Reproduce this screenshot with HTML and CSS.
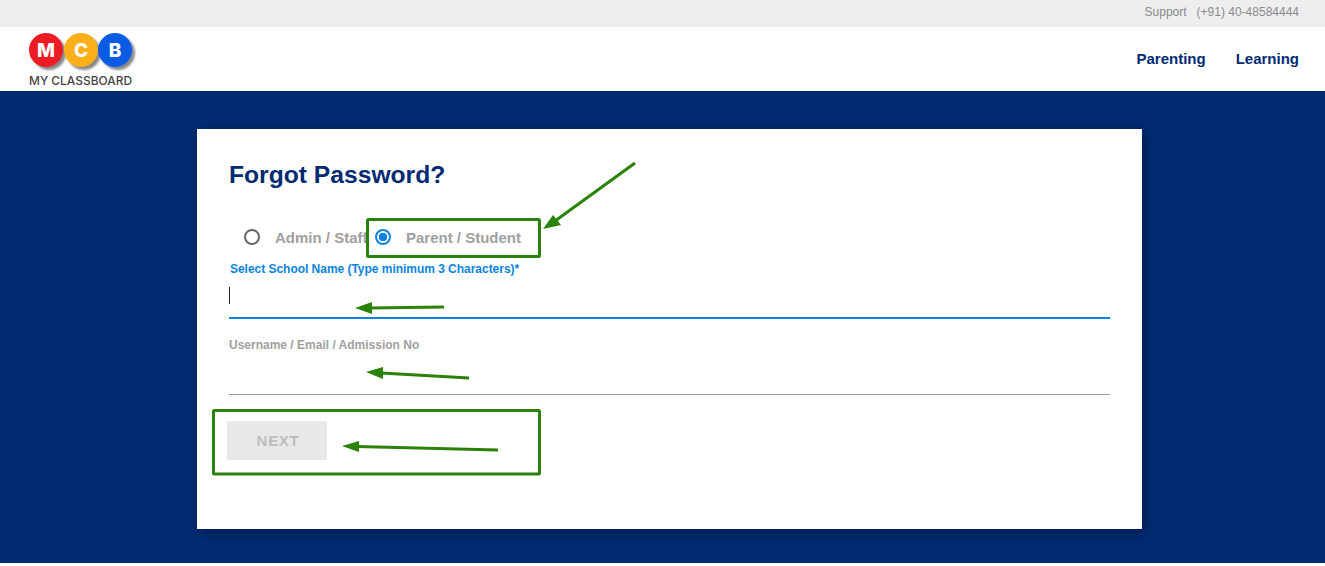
FILE: index.html
```html
<!DOCTYPE html>
<html lang="en">
<head>
    <meta charset="UTF-8">
    <meta name="viewport" content="width=device-width, initial-scale=1.0">
    <title>Forgot Password - My Classboard</title>
    <link rel="stylesheet" href="styles.css">
</head>
<body>
    <div class="topbar">
        <span>Support</span>
        <span>(+91) 40-48584444</span>
    </div>

    <header class="header">
        <svg class="logo" width="110" height="60" viewBox="0 0 110 60">
            <defs>
                <filter id="soft" x="-20%" y="-20%" width="150%" height="150%">
                    <feGaussianBlur stdDeviation="1"/>
                </filter>
            </defs>
            <circle cx="21" cy="21" r="17" fill="#888" filter="url(#soft)"/>
            <circle cx="56" cy="21" r="17" fill="#888" filter="url(#soft)"/>
            <circle cx="90" cy="21" r="17" fill="#888" filter="url(#soft)"/>
            <circle cx="18" cy="18" r="17" fill="#ed1c24"/>
            <circle cx="53" cy="18" r="17" fill="#fdb01a"/>
            <circle cx="87" cy="18" r="17" fill="#0b5ce5"/>
            <text class="logo-letter" x="18" y="25">M</text>
            <text class="logo-letter" x="53" y="25">C</text>
            <text class="logo-letter" x="87" y="25">B</text>
            <text class="logo-name" x="1" y="53" textLength="103" lengthAdjust="spacingAndGlyphs">MY CLASSBOARD</text>
        </svg>
        <nav class="nav">
            <a href="#">Parenting</a>
            <a href="#">Learning</a>
        </nav>
    </header>

    <main class="main">
        <div class="card">
            <h1>Forgot Password?</h1>

            <div class="roles">
                <label class="role role-admin"><span class="radio"></span><span class="role-text">Admin / Staff</span></label>
                <label class="role role-parent"><span class="radio checked"></span><span class="role-text">Parent / Student</span></label>
            </div>

            <div class="field active">
                <label>Select School Name (Type minimum 3 Characters)*</label>
                <div class="line"><span class="caret"></span></div>
            </div>

            <div class="field second">
                <label>Username / Email / Admission No</label>
                <div class="line"></div>
            </div>

            <button class="next" disabled>NEXT</button>
        </div>
    </main>

    <!-- green review marks drawn over the page -->
    <svg class="marks" width="1325" height="566" viewBox="0 0 1325 566">
        <rect x="367.5" y="219.5" width="172" height="37" rx="1"/>
        <rect x="213.5" y="410.5" width="326" height="63.5" rx="1"/>
        <line x1="635" y1="163" x2="555" y2="221"/>
        <polygon points="543,229 553,215 561,225"/>
        <line x1="444" y1="307" x2="370" y2="308"/>
        <polygon points="355,308 372,302 372,314"/>
        <line x1="469" y1="378" x2="381" y2="373"/>
        <polygon points="366,372 383,367 383,379"/>
        <line x1="498" y1="450" x2="357" y2="446.5"/>
        <polygon points="342,446 359,441 359,452"/>
    </svg>
</body>
</html>
```

FILE: styles.css
```css
* {
    box-sizing: border-box;
}
html, body {
    height: 100%;
}
body {
    margin: 0;
    font-family: "Liberation Sans", Arial, sans-serif;
    display: flex;
    flex-direction: column;
    overflow: hidden;
    background: white;
}
.topbar {
    height: 27px;
    background: #eeeeee;
    display: flex;
    justify-content: flex-end;
    align-items: center;
    gap: 10px;
    padding: 0 26px 3px 0;
    font-size: 12px;
    color: #8a8a8a;
}
.header {
    height: 64px;
    background: white;
    display: flex;
    justify-content: space-between;
    align-items: flex-start;
    padding: 0 26px 0 28px;
}
.logo {
    margin-top: 5px;
    display: block;
}
.logo-letter {
    font-family: "Inter", sans-serif;
    font-weight: 800;
    font-size: 19px;
    fill: white;
    text-anchor: middle;
}
.logo-name {
    font-family: "Inter", sans-serif;
    font-weight: 500;
    font-size: 12px;
    fill: #444;
}
.nav {
    display: flex;
    gap: 30px;
    padding-top: 23px;
}
.nav a {
    color: #002b73;
    font-size: 15px;
    font-weight: bold;
    text-decoration: none;
}
.main {
    height: 472px;
    background: #002b73;
    padding: 38px 0 0 197px;
}
.card {
    width: 945px;
    height: 400px;
    background: white;
    padding: 29px 32px;
    box-shadow: 3px 3px 12px rgba(0,0,0,0.4);
}
h1 {
    margin: 0;
    font-size: 24.65px;
    line-height: 34px;
    color: #002b73;
}
.roles {
    display: flex;
    margin-top: 32px;
    height: 26px;
    align-items: center;
    font-size: 15px;
    font-weight: bold;
    color: #a0a0a0;
}
.role {
    display: flex;
    align-items: center;
}
.role-admin {
    width: 146px;
    padding-left: 15px;
    white-space: nowrap;
}
.radio {
    width: 16px;
    height: 16px;
    border: 2px solid #666;
    border-radius: 50%;
    margin-right: 15px;
    flex: none;
}
.radio.checked {
    border-color: #0a84e0;
    background: radial-gradient(circle, #0a84e0 0 4px, white 4.5px);
}
.field {
    width: 881px;
}
.active {
    margin-top: 11px;
}
.field label {
    display: block;
    font-size: 12px;
    line-height: 16px;
    font-weight: bold;
    color: #a0a0a0;
}
.active label {
    color: #0a84e0;
    padding-left: 1px;
    letter-spacing: -0.03px;
}
.line {
    height: 42px;
    border-bottom: 1px solid #999;
    padding-top: 10px;
}
.active .line {
    border-bottom: 2px solid #0a84e0;
}
.caret {
    display: block;
    width: 1px;
    height: 17px;
    background: #222;
}
.second {
    margin-top: 18px;
}
.next {
    display: block;
    margin: 26px 0 0 -2px;
    padding: 0 0 0 2px;
    width: 100px;
    height: 39px;
    border: 0;
    border-radius: 2px;
    background: #e8e8e8;
    color: #bdbdbd;
    font-family: inherit;
    font-size: 15px;
    font-weight: bold;
    letter-spacing: 0.7px;
}
.marks {
    position: absolute;
    top: 0;
    left: 0;
    pointer-events: none;
}
.marks rect {
    fill: none;
    stroke: #2a8208;
    stroke-width: 3;
}
.marks line {
    stroke: #2a8208;
    stroke-width: 3;
}
.marks polygon {
    fill: #2a8208;
}
```
